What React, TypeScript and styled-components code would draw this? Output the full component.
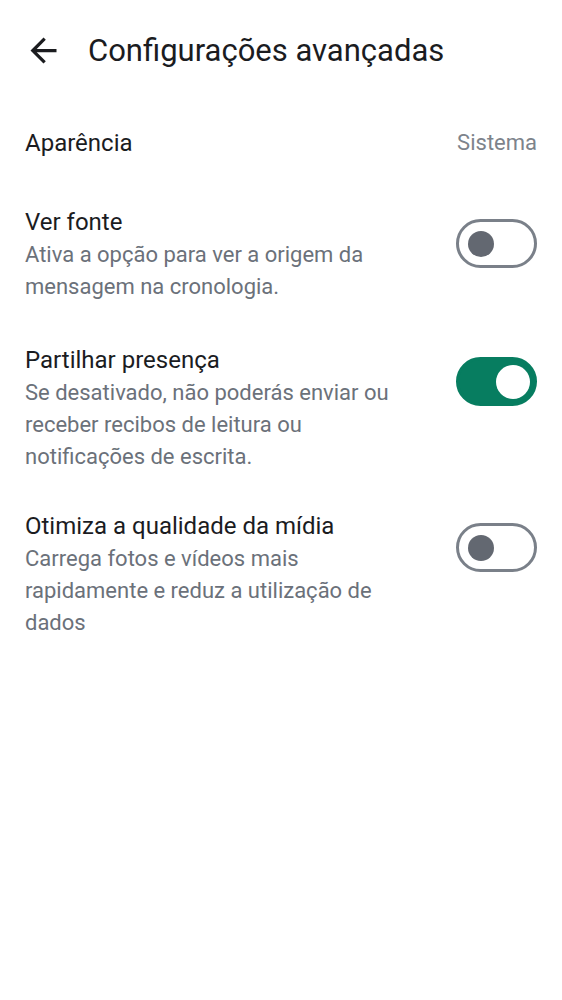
import { useState } from "react";
import styled, { createGlobalStyle } from "styled-components";

const GlobalStyle = createGlobalStyle`
    body {
        margin: 0;
        background: #ffffff;
        font-family: Roboto, "Noto Sans", sans-serif;
    }
`;

const Page = styled.div`
    width: 562px;
    min-height: 1000px;
    background: #ffffff;
`;

const Header = styled.header`
    height: 100px;
    display: flex;
    align-items: center;
    padding: 0 0 0 24px;
    gap: 25px;
    box-sizing: border-box;
`;

const BackButton = styled.button`
    border: none;
    background: none;
    padding: 0;
    width: 39px;
    height: 39px;
    display: flex;
    align-items: center;
    justify-content: center;
    color: #1b1c1f;
`;

const Title = styled.h1`
    margin: 0;
    font-size: 31px;
    font-weight: 400;
    color: #1b1c1f;
`;

const List = styled.div`
    display: flex;
    flex-direction: column;
    padding: 0 25px;
`;

const Row = styled.div<{ $pad: string }>`
    display: flex;
    justify-content: space-between;
    align-items: flex-start;
    gap: 20px;
    padding: ${p => p.$pad};
`;

const Texts = styled.div`
    display: flex;
    flex-direction: column;
    max-width: 400px;
`;

const Label = styled.div`
    font-size: 24px;
    line-height: 34px;
    color: #1b1c1f;
`;

const Desc = styled.div`
    font-size: 22px;
    line-height: 32px;
    color: #6b717a;
`;

const Value = styled.div`
    font-size: 22px;
    line-height: 34px;
    color: #7d838b;
`;

const Track = styled.button<{ $on: boolean }>`
    flex-shrink: 0;
    margin-top: 14px;
    width: 81px;
    height: 49px;
    box-sizing: border-box;
    border-radius: 25px;
    padding: 0;
    cursor: pointer;
    position: relative;
    border: 3px solid ${p => (p.$on ? "#077d60" : "#7a8089")};
    background: ${p => (p.$on ? "#077d60" : "#ffffff")};
`;

const Thumb = styled.span<{ $on: boolean }>`
    position: absolute;
    top: 50%;
    transform: translateY(-50%);
    border-radius: 50%;
    width: ${p => (p.$on ? "34px" : "26px")};
    height: ${p => (p.$on ? "34px" : "26px")};
    left: ${p => (p.$on ? "37px" : "9px")};
    background: ${p => (p.$on ? "#ffffff" : "#636871")};
`;

function Toggle({ on, onClick }: { on: boolean; onClick: () => void }) {
    return (
        <Track $on={on} onClick={onClick}>
            <Thumb $on={on} />
        </Track>
    );
}

interface ISetting {
    id: string;
    label: string;
    desc: string;
    pad: string;
}

const settings: ISetting[] = [
    {
        id: "source",
        label: "Ver fonte",
        desc: "Ativa a opção para ver a origem da mensagem na cronologia.",
        pad: "0 0 40px",
    },
    {
        id: "presence",
        label: "Partilhar presença",
        desc: "Se desativado, não poderás enviar ou receber recibos de leitura ou notificações de escrita.",
        pad: "0 0 36px",
    },
    {
        id: "media",
        label: "Otimiza a qualidade da mídia",
        desc: "Carrega fotos e vídeos mais rapidamente e reduz a utilização de dados",
        pad: "0",
    },
];

export default function App() {
    const [state, setState] = useState<Record<string, boolean>>({
        source: false,
        presence: true,
        media: false,
    });

    return (
        <Page>
            <GlobalStyle />
            <Header>
                <BackButton aria-label="Voltar">
                    <svg width="39" height="39" viewBox="0 0 24 24" fill="currentColor">
                        <path d="M20 11H7.83l5.59-5.59L12 4l-8 8 8 8 1.41-1.41L7.83 13H20v-2z" />
                    </svg>
                </BackButton>
                <Title>Configurações avançadas</Title>
            </Header>
            <List>
                <Row $pad="26px 0 45px">
                    <Label>Aparência</Label>
                    <Value>Sistema</Value>
                </Row>
                {settings.map(s => (
                    <Row key={s.id} $pad={s.pad}>
                        <Texts>
                            <Label>{s.label}</Label>
                            <Desc>{s.desc}</Desc>
                        </Texts>
                        <Toggle
                            on={state[s.id]}
                            onClick={() => setState({ ...state, [s.id]: !state[s.id] })}
                        />
                    </Row>
                ))}
            </List>
        </Page>
    );
}
